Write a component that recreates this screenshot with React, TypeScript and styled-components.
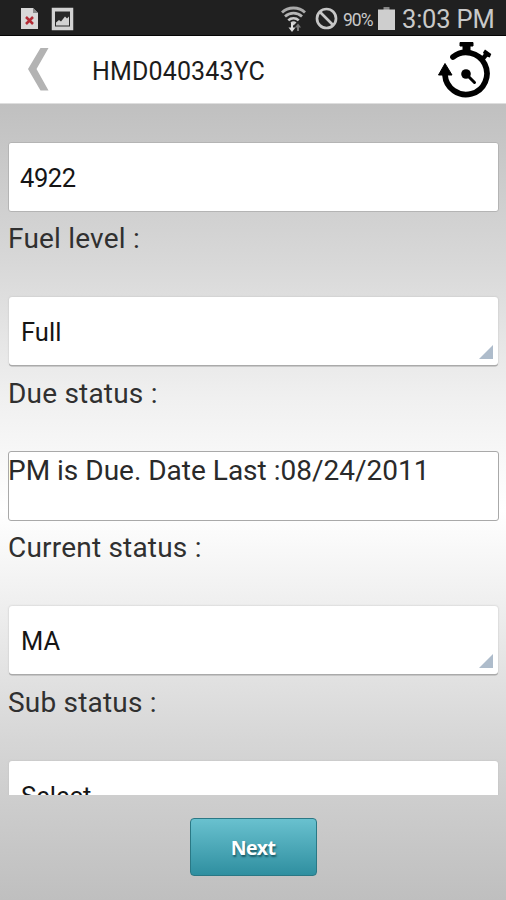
import React from 'react';
import styled, { createGlobalStyle } from 'styled-components';

const GlobalStyle = createGlobalStyle`
  * { box-sizing: border-box; }
  body { margin: 0; font-family: Roboto, "Liberation Sans", sans-serif; }
`;

const Screen = styled.div`
  width: 506px;
  height: 900px;
  display: flex;
  flex-direction: column;
  overflow: hidden;
`;

const StatusBar = styled.div`
  height: 36px;
  flex: none;
  display: flex;
  align-items: center;
  justify-content: space-between;
  padding: 2px 11px 0 21px;
  background: #202020;
  border-bottom: 1px solid #050505;
  color: #c9c9c9;
`;

const StatusGroup = styled.div<{ $gap: number }>`
  display: flex;
  align-items: center;
  gap: ${(p) => p.$gap}px;
  svg { display: block; }
`;

const BatteryText = styled.span`
  font-size: 17.5px;
  width: 32px;
  letter-spacing: -1px;
  margin: 0 3px 0 5px;
  white-space: nowrap;
  padding-top: 2px;
`;

const Clock = styled.span`
  font-size: 25.5px;
  width: 93px;
  letter-spacing: -0.2px;
  white-space: nowrap;
  margin-left: 7px;
`;

const Header = styled.header`
  height: 68px;
  flex: none;
  display: flex;
  align-items: center;
  background: #fff;
  padding: 0 14px 0 27px;
  border-bottom: 1px solid #dedede;
  svg { display: block; }
`;

const Title = styled.h1`
  flex: 1;
  margin: 3px 0 0 43px;
  font-size: 25px;
  font-weight: 400;
  letter-spacing: 0.15px;
  color: #1c1c1c;
`;

const Body = styled.div`
  flex: 1;
  min-height: 0;
  display: flex;
  flex-direction: column;
  background: linear-gradient(#c0c0c0 0%, #d8d8d8 20%, #f0f0f0 37%, #fff 51%, #f0f0f0 62%, #d6d6d6 80%, #bfbfbf 100%);
`;

const Form = styled.main`
  height: 691px;
  flex: none;
  overflow: hidden;
  padding: 38px 7px 0 8px;
`;

const Field = styled.section<{ $height: number }>`
  height: ${(p) => p.$height}px;
`;

const Input = styled.div<{ $flush?: boolean }>`
  height: 70px;
  display: flex;
  align-items: ${(p) => (p.$flush ? 'flex-start' : 'center')};
  padding: ${(p) => (p.$flush ? '2px 0 0' : '2px 11px 0')};
  background: #fff;
  border: 1px solid ${(p) => (p.$flush ? '#a9a9a9' : '#b4b4b4')};
  border-radius: 3px;
  color: ${(p) => (p.$flush ? '#2a2a2a' : '#151515')};
  font-size: ${(p) => (p.$flush ? 28 : 25.5)}px;
  line-height: 33px;
  letter-spacing: ${(p) => (p.$flush ? 0 : -0.4)}px;
  text-indent: ${(p) => (p.$flush ? -1 : 0)}px;
  white-space: nowrap;
`;

const Select = styled.div`
  height: 68px;
  margin: 0 1px 2px;
  position: relative;
  display: flex;
  align-items: center;
  padding: 2px 12px 0;
  background: #fff;
  border-radius: 3px;
  box-shadow: 0 1.5px 0 #aaa, 0 0 2px #bbb;
  color: #151515;
  font-size: 25.5px;
  letter-spacing: 0.05px;
`;

const Corner = styled.svg`
  position: absolute;
  right: 5px;
  bottom: 6px;
  display: block;
`;

const Label = styled.div`
  padding-top: 10px;
  font-size: 28px;
  line-height: 33px;
  letter-spacing: 0.2px;
  color: #303030;
  white-space: nowrap;
`;

const Footer = styled.footer`
  flex: 1;
  display: flex;
  justify-content: center;
  align-items: flex-start;
  padding-top: 23px;
`;

const NextButton = styled.button`
  width: 127px;
  height: 58px;
  padding: 0;
  border: 1.5px solid #2a7885;
  border-radius: 4px;
  background: linear-gradient(#69c1cf, #2f8fa0);
  color: #fff;
  font: 700 19.5px "Open Sans", "Noto Sans", sans-serif;
  letter-spacing: -0.7px;
  text-shadow: 1px 2px 2px rgba(0, 50, 60, 0.65);
`;

const FileErrorIcon = () => (
  <svg width="17" height="23" viewBox="0 0 17 23">
    <path d="M0 1h12l5 5v16H0z" fill="#d8d8d8" />
    <path d="M12 1v5h5z" fill="#888" />
    <path d="M5 10l7 7M12 10l-7 7" stroke="#b32b35" strokeWidth="2.5" />
  </svg>
);

const PictureIcon = () => (
  <svg width="23" height="24" viewBox="0 0 23 24">
    <path d="M1.5 1.5h20v21h-20z" fill="#d2d2d2" stroke="#d2d2d2" strokeWidth="1.5" />
    <path d="M4 4.5h15v15h-15z" fill="#282828" />
    <path d="M5 18.5v-3l3-2.5 2 1.5 4-5 2 2 2-2v9z" fill="#d2d2d2" />
  </svg>
);

const WifiIcon = () => (
  <svg width="25" height="28" viewBox="0 0 25 28" fill="none">
    <path d="M1 7.5C7 1.5 18 1.5 24 7.5" stroke="#aaa" strokeWidth="2.8" />
    <path d="M4 11.5C9 7 16 7 21 11.5" stroke="#b5b5b5" strokeWidth="2.8" />
    <path d="M7.3 15.3C10 12.6 15 12.6 17.7 15.3" stroke="#c8c8c8" strokeWidth="2.6" />
    <path d="M9.5 17.5c1.8-1.6 4.2-1.6 6 0l-3 3z" fill="#ccc" />
    <path d="M11 18v6" stroke="#ddd" strokeWidth="2" />
    <path d="M7.5 22.5h7l-3.5 4.5z" fill="#ddd" />
    <path d="M17 26v-4" stroke="#777" strokeWidth="2" />
    <path d="M13.9 22.5h6.2L17 18.5z" fill="#777" />
  </svg>
);

const BlockedIcon = () => (
  <svg width="23" height="23" viewBox="0 0 23 23" fill="none" stroke="#c6c6c6" strokeWidth="2.7">
    <circle cx="11.5" cy="11.5" r="9.5" />
    <path d="M5 5l13 13" />
  </svg>
);

const BatteryIcon = () => (
  <svg width="17" height="23" viewBox="0 0 17 23">
    <path d="M5.5 0h6v3h-6z" fill="#858585" />
    <path d="M0 2.5h17V23H0z" fill="#cecece" />
  </svg>
);

const BackIcon = () => (
  <svg width="22" height="46" viewBox="0 0 22 46">
    <path d="M13.5 1H21.5L9.5 22L21.5 43.5H13.5L1 22z" fill="#b3b3b3" />
  </svg>
);

const StopwatchIcon = () => (
  <svg width="54" height="58" viewBox="0 0 54 58">
    <path d="M15 16A21 21 0 1 1 7 34" fill="none" stroke="#000" strokeWidth="5.7" strokeLinecap="round" />
    <path d="M0.5 34L7 22.5L14 34z" fill="#000" stroke="#000" strokeLinejoin="round" />
    <path d="M22 1.5h13v3.5h-3v5h-7v-5h-3z" fill="#000" stroke="#000" strokeLinejoin="round" />
    <path d="M47 8.5l6.3 4.5-1.5 3.5-2.5-.7-3 3.7-3.5-3 3-3.5-.8-1.5z" fill="#000" />
    <circle cx="28" cy="33" r="4.8" fill="#000" />
    <path d="M28 33l8.5 8.5" stroke="#000" strokeWidth="3" strokeLinecap="round" />
  </svg>
);

const Dropdown = ({ value }: { value: string }) => (
  <Select>
    {value}
    <Corner width="14" height="14" viewBox="0 0 14 14">
      <path d="M14 0V14H0z" fill="#aebccb" />
    </Corner>
  </Select>
);

export default function App() {
  return (
    <>
      <GlobalStyle />
      <Screen>
        <StatusBar>
          <StatusGroup $gap={13}>
            <FileErrorIcon />
            <PictureIcon />
          </StatusGroup>
          <StatusGroup $gap={0}>
            <StatusGroup $gap={9}>
              <WifiIcon />
              <BlockedIcon />
            </StatusGroup>
            <BatteryText>90%</BatteryText>
            <BatteryIcon />
            <Clock>3:03 PM</Clock>
          </StatusGroup>
        </StatusBar>
        <Header>
          <BackIcon />
          <Title>HMD040343YC</Title>
          <StopwatchIcon />
        </Header>
        <Body>
          <Form>
            <Field $height={155}>
              <Input>4922</Input>
              <Label>Fuel level :</Label>
            </Field>
            <Field $height={154}>
              <Dropdown value="Full" />
              <Label>Due status :</Label>
            </Field>
            <Field $height={155}>
              <Input $flush>PM is Due. Date Last :08/24/2011</Input>
              <Label>Current status :</Label>
            </Field>
            <Field $height={155}>
              <Dropdown value="MA" />
              <Label>Sub status :</Label>
            </Field>
            <Field $height={155}>
              <Dropdown value="Select" />
            </Field>
          </Form>
          <Footer>
            <NextButton>Next</NextButton>
          </Footer>
        </Body>
      </Screen>
    </>
  );
}
